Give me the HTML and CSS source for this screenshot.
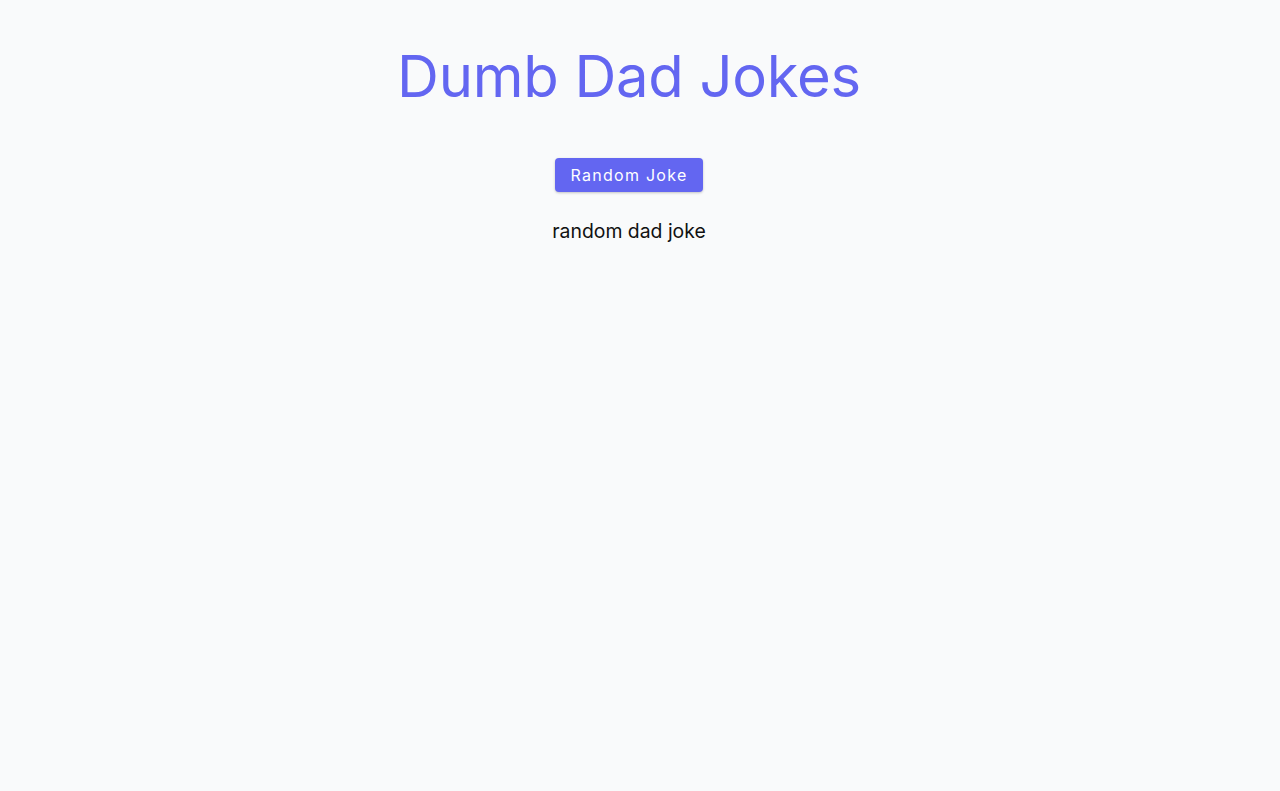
FILE: index.html
```html
<!DOCTYPE html>
<html lang="en">
<head>
<meta charset="utf-8">
<title>Dumb Dad Jokes</title>
<link rel="stylesheet" href="styles.css">
</head>
<body>
<main class="app">
  <h1 class="title">Dumb Dad Jokes</h1>
  <button class="btn" type="button">Random Joke</button>
  <p class="joke">random dad joke</p>
</main>
</body>
</html>
```
FILE: styles.css
```css
html, body {
  margin: 0;
  padding: 0;
  background: #f9fafb;
  font-family: Inter, "Liberation Sans", sans-serif;
  color: #111;
}
.app {
  display: flex;
  flex-direction: column;
  align-items: center;
  padding-top: 40px;
  padding-right: 22px;
}
.title {
  margin: 0;
  font-size: 58px;
  line-height: 72px;
  font-weight: 400;
  color: #6366f1;
  letter-spacing: -0.005em;
}
.btn {
  margin-top: 46px;
  background: #6366f1;
  color: #fff;
  border: none;
  border-radius: 4px;
  padding: 0 15px;
  height: 34px;
  font-family: Inter, "Liberation Sans", sans-serif;
  font-size: 16px;
  font-weight: 400;
  letter-spacing: 0.08em;
  box-shadow: 0 1px 3px rgba(0,0,0,0.15), 0 1px 2px rgba(0,0,0,0.08);
  cursor: pointer;
}
.joke {
  margin: 25px 0 0;
  font-size: 19.4px;
  line-height: 28px;
}
```
